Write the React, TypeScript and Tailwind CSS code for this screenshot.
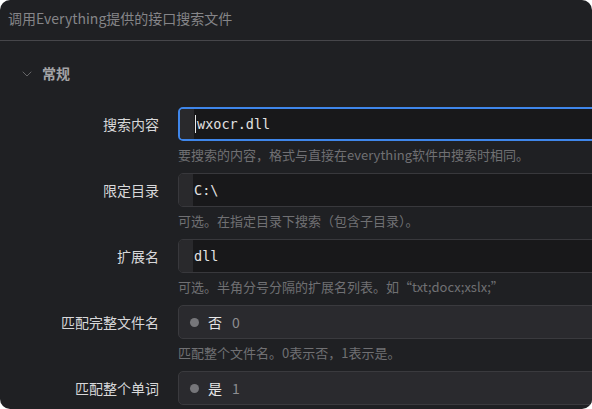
import { ChevronDown } from 'lucide-react'

const cjk = { fontFamily: '"Noto Sans CJK SC", "Noto Sans", sans-serif' }
const mono = { fontFamily: '"DejaVu Sans Mono", "Liberation Mono", "Noto Sans CJK SC", monospace' }

type Field = {
  label: string
  kind: 'text' | 'select'
  value: string
  extra?: string
  help: string
  focused?: boolean
}

const fields: Field[] = [
  { label: '搜索内容', kind: 'text', value: 'wxocr.dll', help: '要搜索的内容，格式与直接在everything软件中搜索时相同。', focused: true },
  { label: '限定目录', kind: 'text', value: 'C:\\', help: '可选。在指定目录下搜索（包含子目录）。' },
  { label: '扩展名', kind: 'text', value: 'dll', help: '可选。半角分号分隔的扩展名列表。如“txt;docx;xslx;”' },
  { label: '匹配完整文件名', kind: 'select', value: '否', extra: '0', help: '匹配整个文件名。0表示否，1表示是。' },
  { label: '匹配整个单词', kind: 'select', value: '是', extra: '1', help: '' },
]

function TextInput({ value, focused }: { value: string; focused?: boolean }) {
  return (
    <div
      className={`flex h-[34px] w-[440px] overflow-hidden rounded-[5px] ${
        focused ? 'border-2 border-[#3f86ea]' : 'border border-[#38383c]'
      }`}
    >
      <div className="w-[14px] shrink-0 bg-[#29292c]" />
      <div className="flex flex-1 items-center bg-[#18181a] pl-[1px] text-[13.5px] text-[#e2e2e2]" style={mono}>
        {focused && <span className="mr-[1px] h-[18px] w-[1px] bg-[#e8e8e8]" />}
        {value}
      </div>
    </div>
  )
}

function SelectInput({ value, extra }: { value: string; extra?: string }) {
  return (
    <div className="flex h-[34px] w-[440px] items-center rounded-[5px] border border-[#3a3a3e] bg-[#2a2a2e] pl-[11px]">
      <span className="h-[9px] w-[9px] rounded-full bg-[#76767a]" />
      <span className="ml-[9px] text-[14px] text-[#e6e6e6]" style={cjk}>{value}</span>
      <span className="ml-[10px] text-[14px] text-[#8d8d90]" style={cjk}>{extra}</span>
    </div>
  )
}

export default function App() {
  return (
    <div className="h-[409px] w-[592px] bg-white">
      <div className="h-full w-full overflow-hidden rounded-[10px] bg-[#1f2023]" style={cjk}>
        <div className="flex h-[41px] items-center border-b border-[#46464a] pl-[8px] pb-[4px] text-[14px] text-[#858588]">
          调用Everything提供的接口搜索文件
        </div>

        <div className="flex h-[66px] items-center pl-[19px] pb-[1px]">
          <ChevronDown className="h-[16px] w-[16px] text-[#707073]" strokeWidth={1.3} />
          <span className="ml-[7px] text-[14px] font-bold text-[#a3a3a6]">常规</span>
        </div>

        <div className="flex flex-col">
          {fields.map((f) => (
            <div key={f.label} className="grid grid-cols-[160px_1fr] gap-x-[18px]">
              <div className="flex h-[34px] items-center justify-end pr-[1px] text-[14px] text-[#d8d8da]">{f.label}</div>
              <div>
                {f.kind === 'text' ? (
                  <TextInput value={f.value} focused={f.focused} />
                ) : (
                  <SelectInput value={f.value} extra={f.extra} />
                )}
                <div className="flex h-[32px] items-start pt-[4px] text-[13px] leading-[20px] text-[#707073]">{f.help}</div>
              </div>
            </div>
          ))}
        </div>
      </div>
    </div>
  )
}
